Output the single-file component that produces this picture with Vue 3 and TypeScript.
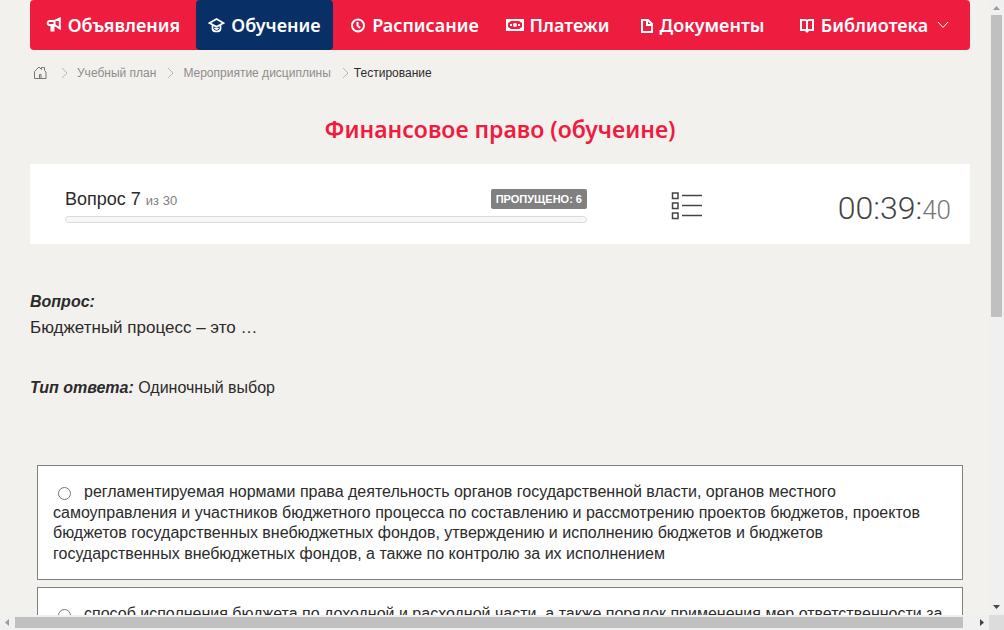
<script setup lang="ts">
import { ref } from 'vue'

interface NavItem {
  label: string
  icon: string
  active?: boolean
  menu?: boolean
}

const navItems: NavItem[] = [
  { label: 'Объявления', icon: 'horn' },
  { label: 'Обучение', icon: 'cap', active: true },
  { label: 'Расписание', icon: 'clock' },
  { label: 'Платежи', icon: 'money' },
  { label: 'Документы', icon: 'file' },
  { label: 'Библиотека', icon: 'book', menu: true },
]

const crumbs: string[] = ['Учебный план', 'Мероприятие дисциплины']

const options: string[] = [
  'регламентируемая нормами права деятельность органов государственной власти, органов местного самоуправления и участников бюджетного процесса по составлению и рассмотрению проектов бюджетов, проектов бюджетов государственных внебюджетных фондов, утверждению и исполнению бюджетов и бюджетов государственных внебюджетных фондов, а также по контролю за их исполнением',
  'способ исполнения бюджета по доходной и расходной части, а также порядок применения мер ответственности за нарушение бюджетного законодательства',
]

const answer = ref<number | null>(null)
</script>

<template>
  <div class="window">
    <div class="viewport">
      <nav class="nav">
        <a
          v-for="item in navItems"
          :key="item.label"
          href="#"
          class="nav-item"
          :class="{ active: item.active }"
        >
          <svg v-if="item.icon === 'horn'" class="icon" width="16" height="16" viewBox="0 0 16 16">
            <path d="M8.500 4 H3.500 Q1.700 4.300 1.700 6 Q1.700 7.800 3.500 8 H8.500 L13.800 11.500 V1.500 Z M8.500 4 V8 M5.500 8.500 V13.500 H7.500 V9" />
          </svg>
          <svg v-else-if="item.icon === 'cap'" class="icon thin" width="17" height="16" viewBox="0 0 17 16">
            <path d="M1.500 6 L8.500 2 L15.500 6 L8.500 9.700 Z M4.500 8 V12 Q5 14.500 8.500 14.500 Q12 14.500 12.500 12 V8 M6.500 11 Q8.500 13 10.500 11" />
          </svg>
          <svg v-else-if="item.icon === 'clock'" class="icon" width="16" height="16" viewBox="0 0 16 16">
            <circle cx="8" cy="8.500" r="6" />
            <path d="M7.500 5 V8.500 L10 11" />
          </svg>
          <svg v-else-if="item.icon === 'money'" class="icon" width="18" height="14" viewBox="0 0 18 14">
            <rect x="1" y="2" width="16" height="10" />
            <path class="solid" d="M2 3 H5 L2 5 Z M16 3 H13 L16 5 Z M2 11 H5 L2 9 Z M16 11 H13 L16 9 Z M4 6 H6 V8 H4 Z M12 6 H14 V8 H12 Z" />
            <circle class="solid" cx="9" cy="7" r="2" />
          </svg>
          <svg v-else-if="item.icon === 'file'" class="icon" width="14" height="16" viewBox="0 0 14 16">
            <path d="M2 3 H8 L12 7 V15 H2 Z M7 3 V8 H12" />
          </svg>
          <svg v-else class="icon" width="16" height="16" viewBox="0 0 16 16">
            <path d="M2 3 H6.500 L8 4 L9.500 3 H14 V13 H9.500 L8 14.500 L6.500 13 H2 Z M8 4 V14" />
          </svg>
          <span>{{ item.label }}</span>
          <svg v-if="item.menu" class="chevron" width="12" height="8" viewBox="0 0 12 8">
            <path d="M1 1 L6 6.500 L11 1" />
          </svg>
        </a>
      </nav>

      <nav class="crumbs" aria-label="Навигация">
        <a href="#" aria-label="Главная" class="home">
          <svg width="14" height="14" viewBox="0 0 14 14">
            <path d="M1.500 5.500 L6 1 L8.500 3.500 V1.500 H11.500 V4.500 L13 6 V12.500 H1.500 Z M6.500 12.500 V8.500 H8 V12.500" />
          </svg>
        </a>
        <template v-for="crumb in crumbs" :key="crumb">
          <svg class="arrow" width="7" height="12" viewBox="0 0 7 12"><path d="M1 1 L6 6 L1 11" /></svg>
          <a href="#">{{ crumb }}</a>
        </template>
        <svg class="arrow last" width="7" height="12" viewBox="0 0 7 12"><path d="M1 1 L6 6 L1 11" /></svg>
        <span class="current">Тестирование</span>
      </nav>

      <h1 class="title">Финансовое право (обучеине)</h1>

      <section class="panel">
        <div class="progress">
          <div class="progress-head">
            <div class="count">Вопрос 7 <small>из 30</small></div>
            <span class="badge">ПРОПУЩЕНО: 6</span>
          </div>
          <div class="bar" role="progressbar" aria-label="Ход теста" aria-valuenow="0" aria-valuemin="0" aria-valuemax="30"></div>
        </div>
        <button class="list" type="button" aria-label="Список вопросов">
          <svg width="32" height="30" viewBox="0 0 32 30">
            <path d="M1.500 2 H7 V7.500 H1.500 Z M1.500 12 H7 V17.500 H1.500 Z M1.500 22 H7 V27.500 H1.500 Z M11 4.500 H31 M11 14.500 H31 M11 24.500 H31" />
          </svg>
        </button>
        <div class="timer">00:39:<small>40</small></div>
      </section>

      <section class="question">
        <strong>Вопрос:</strong>
        <p>Бюджетный процесс – это …</p>
      </section>
      <p class="kind"><strong>Тип ответа:</strong> Одиночный выбор</p>

      <div class="options">
        <label v-for="(option, index) in options" :key="index" class="option">
          <input v-model="answer" type="radio" name="answer" :value="index" />{{ option }}
        </label>
      </div>
    </div>

    <div class="scroll vertical" aria-hidden="true">
      <svg width="15" height="15" viewBox="0 0 15 15"><path class="dim" d="M4 10 L7.500 6 L11 10 Z" /></svg>
      <div class="track"><div class="thumb"></div></div>
      <svg width="15" height="15" viewBox="0 0 15 15"><path d="M4 5 L7.500 9 L11 5 Z" /></svg>
    </div>
    <div class="scroll horizontal" aria-hidden="true">
      <svg width="15" height="15" viewBox="0 0 15 15"><path class="dim" d="M9 4 L5 7.500 L9 11 Z" /></svg>
      <div class="track"><div class="thumb"></div></div>
      <svg width="15" height="15" viewBox="0 0 15 15"><path d="M6 4 L10 7.500 L6 11 Z" /></svg>
    </div>
    <div class="corner"></div>
  </div>
</template>

<style>
body {
  margin: 0;
  background: #f3f1ee;
}
</style>

<style scoped>
.window {
  display: grid;
  grid-template: minmax(0, 1fr) 15px / minmax(0, 1fr) 15px;
  height: 100vh;
  overflow: hidden;
  font-family: "Liberation Sans", Arial, sans-serif;
  font-size: 16px;
  color: #2b2b2b;
}

.viewport {
  overflow: hidden;
  padding: 0 19px 0 30px;
}

a {
  color: inherit;
  text-decoration: none;
}

svg {
  display: block;
  flex: none;
  fill: none;
}

.nav {
  display: grid;
  grid-template-columns: 166fr 137fr 163fr 123fr 166fr 178fr;
  height: 50px;
  padding-right: 7px;
  border-radius: 4px;
  background: #ee1c3f;
}

.nav-item {
  display: flex;
  align-items: center;
  justify-content: center;
  gap: 6px;
  border-radius: 4px;
  color: #fff;
  font: 600 18px/24px "Noto Sans", "Open Sans", sans-serif;
  white-space: nowrap;
}

.nav-item.active {
  background: #083066;
}

.icon {
  stroke: #fff;
  stroke-width: 2;
}

.icon.thin {
  stroke-width: 1.700;
}

.icon .solid {
  fill: #fff;
  stroke: none;
}

.chevron {
  margin-left: 3px;
  stroke: #fff;
}

.crumbs {
  display: flex;
  align-items: center;
  height: 16px;
  padding-left: 3px;
  margin-top: 15px;
  color: #8d8d8d;
  font-size: 12px;
}

.home {
  margin-right: 3px;
}

.home svg {
  stroke: #777;
}

.arrow {
  margin: 0 9px 0 11px;
  stroke: #b8b8b8;
}

.arrow.last {
  margin-right: 5px;
}

.current {
  color: #2b2b2b;
}

.title {
  margin: 32px 0 0;
  color: #ee1c3f;
  font: 600 23px/32px "Noto Sans", "Open Sans", sans-serif;
  text-align: center;
}

.panel {
  display: grid;
  grid-template-columns: 522fr 200fr 164fr;
  align-items: center;
  box-sizing: border-box;
  height: 80px;
  margin-top: 19px;
  padding: 0 19px 0 35px;
  background: #fff;
}

.progress-head {
  display: flex;
  align-items: center;
  justify-content: space-between;
  height: 20px;
  margin-top: 4px;
}

.count {
  font-size: 18px;
}

.count small {
  color: #808080;
  font-size: 13px;
}

.badge {
  padding: 0 5px;
  border-radius: 2px;
  background: #808080;
  color: #fff;
  font-size: 11px;
  font-weight: bold;
  line-height: 20px;
}

.bar {
  height: 5px;
  margin-top: 7px;
  border: 1px solid #d9d9d9;
  border-radius: 4px;
  background: #f7f7f7;
}

.list {
  justify-self: center;
  margin: 4px 0 0;
  padding: 0;
  border: 0;
  background: none;
}

.list svg {
  stroke: #444;
  stroke-width: 1.500;
}

.timer {
  margin-top: 10px;
  color: #444;
  font: 300 32px/40px Roboto, sans-serif;
  text-align: right;
}

.timer small {
  color: #777;
  font-size: 26px;
}

strong {
  font-style: italic;
}

.question {
  margin-top: 45px;
  line-height: 26px;
}

.question p {
  margin: 0;
  font-size: 17px;
}

.kind {
  margin: 34px 0 0;
  line-height: 26px;
}

.options {
  display: grid;
  gap: 7px;
  margin: 64px 7px 0;
}

.option {
  display: block;
  padding: 16px 15px 14px;
  border: 1px solid #808080;
  background: #fff;
  line-height: 1.29;
}

.option input {
  width: 13px;
  height: 13px;
  margin: 0 13px 0 5px;
  vertical-align: -3px;
}

.scroll {
  display: flex;
  background: #f0f0f0;
}

.scroll path {
  fill: #444;
}

.scroll .dim {
  fill: #9c9c9c;
}

.vertical {
  flex-direction: column;
}

.track {
  display: grid;
  flex: 1;
}

.thumb {
  background: #c0c0c0;
}

.vertical .track {
  grid-template-rows: 302fr 283fr;
}

.vertical .thumb {
  margin: 0 2px;
}

.horizontal .track {
  grid-template-columns: 948fr 11fr;
}

.horizontal .thumb {
  margin: 2px 0;
}

.corner {
  background: #dcdcdc;
}
</style>
